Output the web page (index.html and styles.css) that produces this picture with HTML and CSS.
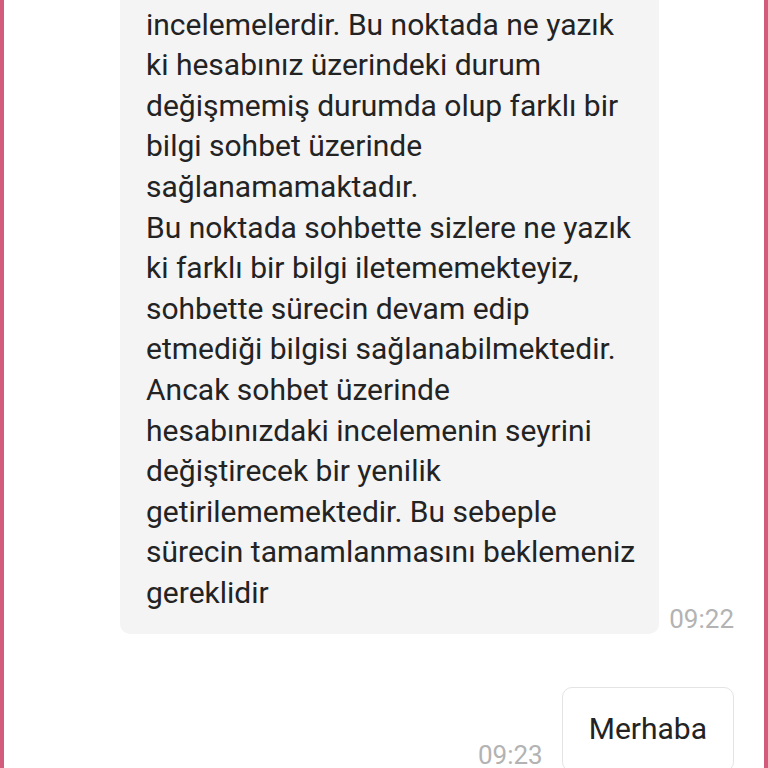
FILE: index.html
```html
<!DOCTYPE html>
<html lang="tr">
<head>
<meta charset="utf-8">
<link rel="stylesheet" href="styles.css">
</head>
<body>
<div class="screen">
  <div class="chat">
    <div class="row incoming">
      <div class="bubble bubble-gray">
        <p>doğru, güvenliğiniz için yapılan incelemelerdir. Bu noktada ne yazık ki hesabınız üzerindeki durum değişmemiş durumda olup farklı bir bilgi sohbet üzerinde sağlanamamaktadır.</p>
        <p>Bu noktada sohbette sizlere ne yazık ki farklı bir bilgi iletememekteyiz, sohbette sürecin devam edip etmediği bilgisi sağlanabilmektedir. Ancak sohbet üzerinde hesabınızdaki incelemenin seyrini değiştirecek bir yenilik getirilememektedir. Bu sebeple sürecin tamamlanmasını beklemeniz gereklidir</p>
      </div>
      <span class="time">09:22</span>
    </div>
    <div class="row outgoing">
      <span class="time time-out">09:23</span>
      <div class="bubble bubble-white">Merhaba</div>
    </div>
  </div>
</div>
</body>
</html>
```
FILE: styles.css
```css
html, body {
  margin: 0;
  padding: 0;
  background: #ffffff;
}
.screen {
  width: 768px;
  height: 768px;
  box-sizing: border-box;
  border-left: 4px solid #d35b7c;
  border-right: 4px solid #d35b7c;
  overflow: hidden;
  font-family: Roboto, "Noto Sans", sans-serif;
  color: #232323;
}
.chat {
  margin-top: -55px;
  padding-left: 116px;
  padding-right: 30px;
}
.row {
  display: flex;
  align-items: flex-end;
}
.incoming {
  gap: 10px;
}
.outgoing {
  justify-content: flex-end;
  gap: 19px;
  margin-top: 53px;
}
.bubble {
  box-sizing: border-box;
  border-radius: 10px;
  font-size: 30px;
  line-height: 40.6px;
}
.bubble-gray {
  width: 540px;
  background: #f4f4f5;
  padding: 19px 24px 20px 26px;
}
.bubble-gray p {
  margin: 0;
}
.bubble-white {
  background: #ffffff;
  border: 1px solid #e4e4e4;
  padding: 21px 26px 22px 26px;
}
.time {
  font-size: 26px;
  line-height: 30px;
  color: #b3b3b3;
}
.time-out {
  margin-bottom: 2px;
}
```
